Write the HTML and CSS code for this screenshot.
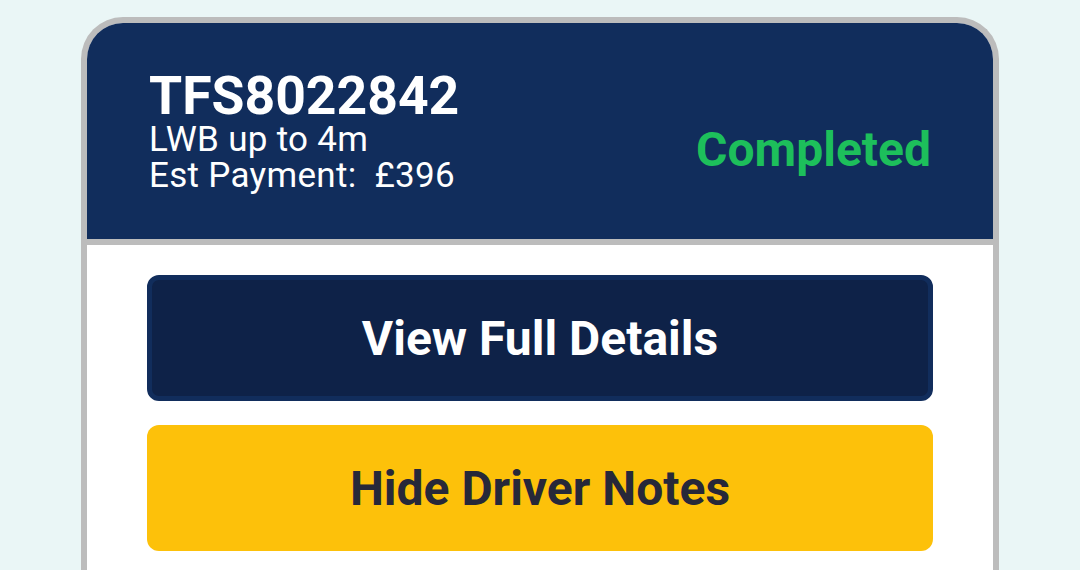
FILE: index.html
```html
<!DOCTYPE html>
<html lang="en">
  <head>
    <title>Job TFS8022842</title>
    <meta charset="UTF-8">
    <link rel="stylesheet" href="styles.css">
  </head>
  <body>
    <div class="card">
        <div class="header">
            <div class="info">
                <h1 class="ref">TFS8022842</h1>
                <div class="line">LWB up to 4m</div>
                <div class="line">Est Payment:&nbsp; £396</div>
            </div>
            <div class="status">Completed</div>
        </div>
        <div class="body">
            <button class="btn btn-dark">View Full Details</button>
            <button class="btn btn-yellow">Hide Driver Notes</button>
        </div>
    </div>
  </body>
</html>
```

FILE: styles.css
```css
*{
    margin: 0;
    padding: 0;
    box-sizing: border-box;
}
html,body{width: 100%;height: 100%;}
body{
    background: #eaf6f6;
    font-family: Roboto, "Liberation Sans", sans-serif;
    overflow: hidden;
}
.card{
    width: 918px;
    margin: 17px 0 0 81px;
    border: 6px solid #bcbcbc;
    border-bottom: none;
    border-radius: 42px 42px 0 0;
    overflow: hidden;
    background: #fff;
    height: 700px;
}
.header{
    height: 222px;
    background: #112d5c;
    border-bottom: 6px solid #bcbcbc;
    display: flex;
    align-items: center;
    justify-content: space-between;
    padding: 0 62px;
}
.info{
    color: #fff;
}
.ref{
    font-size: 53.5px;
    line-height: 53px;
    font-weight: 700;
}
.line{
    font-size: 35px;
    line-height: 36px;
    letter-spacing: 0.3px;
}
.status{
    color: #1dbf5b;
    font-size: 48px;
    line-height: 48px;
    font-weight: 700;
    padding-top: 37px;
}
.body{
    padding: 30px 60px;
    display: flex;
    flex-direction: column;
    gap: 24px;
}
.btn{
    height: 126px;
    border-radius: 12px;
    font-family: inherit;
    font-size: 48px;
    font-weight: 700;
    border: none;
    width: 100%;
}
.btn-dark{
    background: #0e2248;
    border: 5px solid #112d5c;
    color: #fff;
}
.btn-yellow{
    background: #fdc10a;
    color: #272839;
}
```
